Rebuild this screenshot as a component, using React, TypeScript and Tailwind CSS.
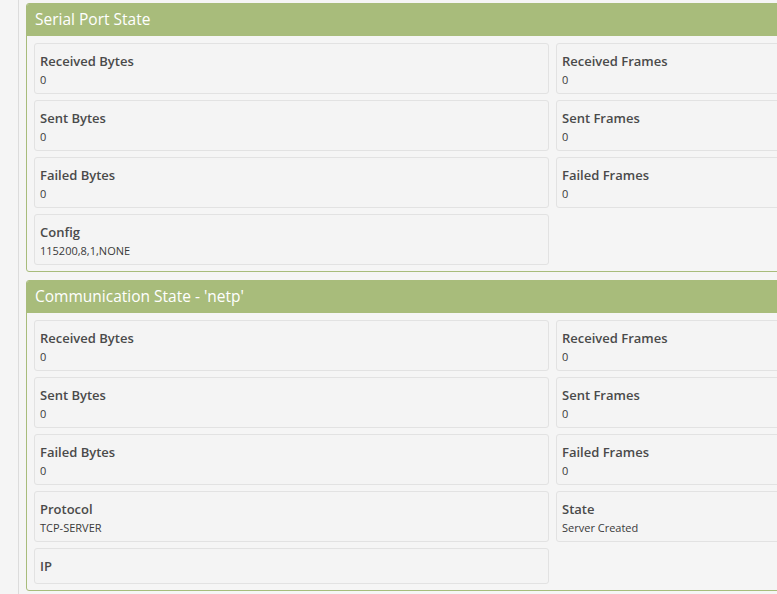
import React from "react";

type Item = { label: string; value?: string };

const serial: Item[] = [
  { label: "Received Bytes", value: "0" },
  { label: "Received Frames", value: "0" },
  { label: "Sent Bytes", value: "0" },
  { label: "Sent Frames", value: "0" },
  { label: "Failed Bytes", value: "0" },
  { label: "Failed Frames", value: "0" },
  { label: "Config", value: "115200,8,1,NONE" },
];

const comm: Item[] = [
  { label: "Received Bytes", value: "0" },
  { label: "Received Frames", value: "0" },
  { label: "Sent Bytes", value: "0" },
  { label: "Sent Frames", value: "0" },
  { label: "Failed Bytes", value: "0" },
  { label: "Failed Frames", value: "0" },
  { label: "Protocol", value: "TCP-SERVER" },
  { label: "State", value: "Server Created" },
  { label: "IP" },
];

function Card({ item }: { item: Item }) {
  return (
    <div
      className={
        "border border-[#e2e2e2] rounded-[3px] bg-[#f4f4f4] px-[5px] pt-[7px] " +
        (item.value !== undefined ? "h-[51px]" : "h-[36px]")
      }
    >
      <div className="text-[13px] leading-[20px] font-semibold text-[#4a4a4a]">{item.label}</div>
      {item.value !== undefined && (
        <div className="mt-[1px] text-[11px] leading-[16px] text-[#3a3a3a]">{item.value}</div>
      )}
    </div>
  );
}

function Panel({ title, items }: { title: string; items: Item[] }) {
  return (
    <div className="w-[1080px] shrink-0 border border-[#a8bc7b] rounded-[3px] bg-[#f5f5f5] overflow-hidden">
      <div className="h-[32px] bg-[#a8bc7b] text-white text-[15.5px] pl-2 flex items-center">{title}</div>
      <div className="px-[7px] pt-[7px] pb-[6px] grid grid-cols-[515px_515px] gap-x-[7px] gap-y-[6px]">
        {items.map((it, i) => (
          <Card key={i} item={it} />
        ))}
      </div>
    </div>
  );
}

export default function App() {
  return (
    <div
      className="w-full h-[594px] overflow-hidden bg-[#f5f5f5] flex"
      style={{ fontFamily: '"Open Sans", sans-serif' }}
    >
      <div className="w-[19px] shrink-0 border-r border-[#dcdcdc]" />
      <div className="pl-[7px] pt-[3px] flex flex-col gap-2">
        <Panel title="Serial Port State" items={serial} />
        <Panel title="Communication State - 'netp'" items={comm} />
      </div>
    </div>
  );
}
